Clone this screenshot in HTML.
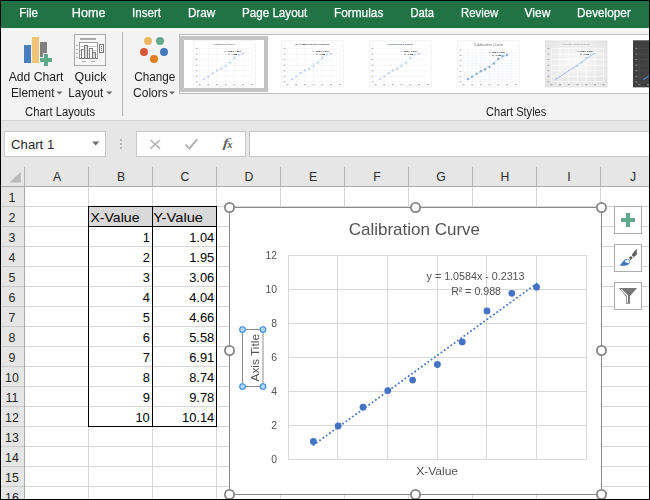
<!DOCTYPE html>
<html lang="en"><head><meta charset="utf-8"><title>Calibration Curve - Excel</title>
<style>html,body{margin:0;padding:0;background:#000;width:650px;height:500px;overflow:hidden}svg{display:block;position:absolute;left:0;top:0}text{font-family:"Liberation Sans", sans-serif;white-space:pre}.c{shape-rendering:crispEdges}</style></head><body>
<svg width="650" height="500" viewBox="0 0 650 500">
<g class="c">
<rect x="0" y="0" width="650" height="500" fill="#000"/>
<rect x="1" y="1" width="648" height="27" fill="#217346"/>
<rect x="1" y="28" width="648" height="92" fill="#f3f3f3"/>
<rect x="1" y="120" width="648" height="47" fill="#e6e6e6"/>
<rect x="1" y="120" width="648" height="1" fill="#d2d2d2"/>
<rect x="1" y="167" width="648" height="20" fill="#e6e6e6"/>
<rect x="1" y="187" width="24" height="312" fill="#e6e6e6"/>
<rect x="25" y="187" width="624" height="312" fill="#ffffff"/>
</g>
<g id="ribbon">
<g class="c">
<rect x="24" y="45" width="7" height="18" fill="#4a7ebb"/>
<rect x="32" y="37" width="7" height="26" fill="#f0c577"/>
<rect x="40" y="42" width="7" height="15" fill="#7f7f7f"/>
</g>
<g class="c">
<rect x="43" y="53" width="6" height="14" fill="#f3f3f3"/>
<rect x="39" y="57" width="14" height="6" fill="#f3f3f3"/>
<rect x="44" y="54" width="4" height="12" fill="#5fa88a"/>
<rect x="40" y="58" width="12" height="4" fill="#5fa88a"/>
</g>
<path d="M56.5 91.5h6l-3 3z" fill="#666"/>
<g class="c">
<rect x="74" y="34" width="32" height="32" fill="#a9a9a9"/>
<rect x="75" y="35" width="30" height="30" fill="#f6f6f6"/>
<rect x="80" y="38" width="16" height="2" fill="#ababab"/>
<rect x="79" y="42" width="19" height="17" fill="#9c9c9c"/>
<rect x="80" y="43" width="17" height="15" fill="#ffffff"/>
<rect x="80" y="46" width="17" height="1" fill="#c9c9c9"/>
<rect x="80" y="50" width="17" height="1" fill="#c9c9c9"/>
<rect x="80" y="54" width="17" height="1" fill="#c9c9c9"/>
<rect x="76" y="45" width="2" height="1" fill="#b4b4b4"/>
<rect x="76" y="49" width="2" height="1" fill="#b4b4b4"/>
<rect x="76" y="53" width="2" height="1" fill="#b4b4b4"/>
<rect x="76" y="57" width="2" height="1" fill="#b4b4b4"/>
<rect x="81" y="49" width="4" height="9" fill="#7d7d7d"/>
<rect x="82" y="50" width="2" height="8" fill="#ffffff"/>
<rect x="84" y="45" width="4" height="13" fill="#7d7d7d"/>
<rect x="85" y="46" width="2" height="12" fill="#d6d6d6"/>
<rect x="89" y="48" width="4" height="10" fill="#7d7d7d"/>
<rect x="90" y="49" width="2" height="9" fill="#ffffff"/>
<rect x="92" y="52" width="4" height="6" fill="#7d7d7d"/>
<rect x="93" y="53" width="2" height="5" fill="#d6d6d6"/>
<rect x="79" y="58" width="19" height="1" fill="#7d7d7d"/>
<rect x="99" y="44" width="5" height="9" fill="#777777"/>
<rect x="100" y="45" width="3" height="7" fill="#ffffff"/>
<rect x="101" y="46" width="1" height="1" fill="#777777"/>
<rect x="101" y="48" width="1" height="1" fill="#777777"/>
<rect x="101" y="50" width="1" height="1" fill="#777777"/>
<rect x="82" y="61" width="4" height="1" fill="#b0b0b0"/>
<rect x="91" y="61" width="4" height="1" fill="#b0b0b0"/>
</g>
<path d="M106.3 91.5h6l-3 3z" fill="#666"/>
<g class="c">
<rect x="122" y="32" width="1" height="84" fill="#b1b1b1"/>
</g>
<circle cx="148" cy="40.9" r="4.0" fill="#ecb762"/>
<circle cx="160" cy="40.9" r="4.0" fill="#66a88c"/>
<circle cx="144" cy="52.1" r="4.0" fill="#d75736"/>
<circle cx="164" cy="52.1" r="4.0" fill="#4279b6"/>
<circle cx="154" cy="59.1" r="4.0" fill="#e67b20"/>
<path d="M169 91.5h6l-3 3z" fill="#666"/>
<g class="c">
<rect x="179" y="34" width="470" height="60" fill="#b9bcbf"/>
<rect x="180" y="35" width="469" height="58" fill="#ffffff"/>
<rect x="180" y="36" width="88" height="56" fill="#c3c3c3"/>
<rect x="184" y="40" width="80" height="48" fill="#ffffff"/>
</g>
</g>
<g id="formulabar">
<g class="c">
<rect x="4" y="131" width="102" height="26" fill="#c8c8c8"/>
<rect x="5" y="132" width="100" height="24" fill="#ffffff"/>
<rect x="136" y="131" width="110" height="26" fill="#c8c8c8"/>
<rect x="137" y="132" width="108" height="24" fill="#ffffff"/>
<rect x="249" y="131" width="400" height="26" fill="#c8c8c8"/>
<rect x="250" y="132" width="399" height="24" fill="#ffffff"/>
<rect x="120" y="139" width="2" height="2" fill="#b4b4b4"/>
<rect x="120" y="143" width="2" height="2" fill="#b4b4b4"/>
<rect x="120" y="147" width="2" height="2" fill="#b4b4b4"/>
</g>
<text x="11.10" y="148.60" font-size="12.4" fill="#2a2a2a" textLength="43.12" lengthAdjust="spacingAndGlyphs">Chart 1</text>
<path d="M92 141.5h7.4l-3.7 4z" fill="#6e6e6e"/>
<path d="M150.3 140l9.7 8.700M160 140l-9.700 8.700" stroke="#b4b4b4" stroke-width="1.6" fill="none"/>
<path d="M185.600 144.800l3.900 3.700 7.700-9.300" stroke="#b4b4b4" stroke-width="2" fill="none"/>
<text x="222.3" y="147" font-size="13.2" font-style="italic" fill="#5a5a5a" style="font-family:'Liberation Serif',serif" textLength="6.6" lengthAdjust="spacingAndGlyphs">f</text>
<text x="227.2" y="148.2" font-size="9.5" font-style="italic" font-weight="bold" fill="#5a5a5a" style="font-family:'Liberation Serif',serif" textLength="5.3" lengthAdjust="spacingAndGlyphs">x</text>
</g>
<g id="grid" class="c">
<rect x="24" y="167" width="1" height="19" fill="#b4b4b4"/>
<rect x="88" y="167" width="1" height="19" fill="#b4b4b4"/>
<rect x="152" y="167" width="1" height="19" fill="#b4b4b4"/>
<rect x="216" y="167" width="1" height="19" fill="#b4b4b4"/>
<rect x="280" y="167" width="1" height="19" fill="#b4b4b4"/>
<rect x="344" y="167" width="1" height="19" fill="#b4b4b4"/>
<rect x="408" y="167" width="1" height="19" fill="#b4b4b4"/>
<rect x="472" y="167" width="1" height="19" fill="#b4b4b4"/>
<rect x="536" y="167" width="1" height="19" fill="#b4b4b4"/>
<rect x="600" y="167" width="1" height="19" fill="#b4b4b4"/>
<rect x="1" y="186" width="648" height="1" fill="#ababab"/>
<rect x="24" y="187" width="1" height="312" fill="#ababab"/>
<rect x="1" y="206" width="23" height="1" fill="#c9c9c9"/>
<rect x="25" y="206" width="624" height="1" fill="#d6d6d6"/>
<rect x="1" y="226" width="23" height="1" fill="#c9c9c9"/>
<rect x="25" y="226" width="624" height="1" fill="#d6d6d6"/>
<rect x="1" y="246" width="23" height="1" fill="#c9c9c9"/>
<rect x="25" y="246" width="624" height="1" fill="#d6d6d6"/>
<rect x="1" y="266" width="23" height="1" fill="#c9c9c9"/>
<rect x="25" y="266" width="624" height="1" fill="#d6d6d6"/>
<rect x="1" y="286" width="23" height="1" fill="#c9c9c9"/>
<rect x="25" y="286" width="624" height="1" fill="#d6d6d6"/>
<rect x="1" y="306" width="23" height="1" fill="#c9c9c9"/>
<rect x="25" y="306" width="624" height="1" fill="#d6d6d6"/>
<rect x="1" y="326" width="23" height="1" fill="#c9c9c9"/>
<rect x="25" y="326" width="624" height="1" fill="#d6d6d6"/>
<rect x="1" y="346" width="23" height="1" fill="#c9c9c9"/>
<rect x="25" y="346" width="624" height="1" fill="#d6d6d6"/>
<rect x="1" y="366" width="23" height="1" fill="#c9c9c9"/>
<rect x="25" y="366" width="624" height="1" fill="#d6d6d6"/>
<rect x="1" y="386" width="23" height="1" fill="#c9c9c9"/>
<rect x="25" y="386" width="624" height="1" fill="#d6d6d6"/>
<rect x="1" y="406" width="23" height="1" fill="#c9c9c9"/>
<rect x="25" y="406" width="624" height="1" fill="#d6d6d6"/>
<rect x="1" y="426" width="23" height="1" fill="#c9c9c9"/>
<rect x="25" y="426" width="624" height="1" fill="#d6d6d6"/>
<rect x="1" y="446" width="23" height="1" fill="#c9c9c9"/>
<rect x="25" y="446" width="624" height="1" fill="#d6d6d6"/>
<rect x="1" y="466" width="23" height="1" fill="#c9c9c9"/>
<rect x="25" y="466" width="624" height="1" fill="#d6d6d6"/>
<rect x="1" y="486" width="23" height="1" fill="#c9c9c9"/>
<rect x="25" y="486" width="624" height="1" fill="#d6d6d6"/>
<rect x="88" y="187" width="1" height="312" fill="#d6d6d6"/>
<rect x="152" y="187" width="1" height="312" fill="#d6d6d6"/>
<rect x="216" y="187" width="1" height="312" fill="#d6d6d6"/>
<rect x="280" y="187" width="1" height="312" fill="#d6d6d6"/>
<rect x="344" y="187" width="1" height="312" fill="#d6d6d6"/>
<rect x="408" y="187" width="1" height="312" fill="#d6d6d6"/>
<rect x="472" y="187" width="1" height="312" fill="#d6d6d6"/>
<rect x="536" y="187" width="1" height="312" fill="#d6d6d6"/>
<rect x="600" y="187" width="1" height="312" fill="#d6d6d6"/>
</g>
<path d="M20.8 171.8v10.8h-11.2z" fill="#b9b9b9"/>
<g id="headers">
<text x="57" y="180.8" font-size="12.2" fill="#2b2b2b" text-anchor="middle">A</text>
<text x="121" y="180.8" font-size="12.2" fill="#2b2b2b" text-anchor="middle">B</text>
<text x="185" y="180.8" font-size="12.2" fill="#2b2b2b" text-anchor="middle">C</text>
<text x="249" y="180.8" font-size="12.2" fill="#2b2b2b" text-anchor="middle">D</text>
<text x="313" y="180.8" font-size="12.2" fill="#2b2b2b" text-anchor="middle">E</text>
<text x="377" y="180.8" font-size="12.2" fill="#2b2b2b" text-anchor="middle">F</text>
<text x="441" y="180.8" font-size="12.2" fill="#2b2b2b" text-anchor="middle">G</text>
<text x="505" y="180.8" font-size="12.2" fill="#2b2b2b" text-anchor="middle">H</text>
<text x="569" y="180.8" font-size="12.2" fill="#2b2b2b" text-anchor="middle">I</text>
<text x="633" y="180.8" font-size="12.2" fill="#2b2b2b" text-anchor="middle">J</text>
<text x="12.0" y="202" font-size="12.4" fill="#262626" text-anchor="middle">1</text>
<text x="12.0" y="222" font-size="12.4" fill="#262626" text-anchor="middle">2</text>
<text x="12.0" y="242" font-size="12.4" fill="#262626" text-anchor="middle">3</text>
<text x="12.0" y="262" font-size="12.4" fill="#262626" text-anchor="middle">4</text>
<text x="12.0" y="282" font-size="12.4" fill="#262626" text-anchor="middle">5</text>
<text x="12.0" y="302" font-size="12.4" fill="#262626" text-anchor="middle">6</text>
<text x="12.0" y="322" font-size="12.4" fill="#262626" text-anchor="middle">7</text>
<text x="12.0" y="342" font-size="12.4" fill="#262626" text-anchor="middle">8</text>
<text x="12.0" y="362" font-size="12.4" fill="#262626" text-anchor="middle">9</text>
<text x="12.0" y="382" font-size="12.4" fill="#262626" text-anchor="middle">10</text>
<text x="12.0" y="402" font-size="12.4" fill="#262626" text-anchor="middle">11</text>
<text x="12.0" y="422" font-size="12.4" fill="#262626" text-anchor="middle">12</text>
<text x="12.0" y="442" font-size="12.4" fill="#262626" text-anchor="middle">13</text>
<text x="12.0" y="462" font-size="12.4" fill="#262626" text-anchor="middle">14</text>
<text x="12.0" y="482" font-size="12.4" fill="#262626" text-anchor="middle">15</text>
<text x="12.0" y="502" font-size="12.4" fill="#262626" text-anchor="middle">16</text>
</g>
<g id="table">
<g class="c">
<rect x="89" y="207" width="63" height="19" fill="#d9d9d9"/>
<rect x="153" y="207" width="63" height="19" fill="#d9d9d9"/>
<rect x="88" y="206" width="129" height="1" fill="#000"/>
<rect x="88" y="226" width="129" height="1" fill="#000"/>
<rect x="88" y="426" width="129" height="1" fill="#000"/>
<rect x="88" y="206" width="1" height="221" fill="#000"/>
<rect x="152" y="206" width="1" height="221" fill="#000"/>
<rect x="216" y="206" width="1" height="221" fill="#000"/>
</g>
<text x="90.47" y="222.20" font-size="13.3" fill="#000" textLength="49.00" lengthAdjust="spacingAndGlyphs">X-Value</text>
<text x="153.17" y="222.20" font-size="13.3" fill="#000" textLength="49.90" lengthAdjust="spacingAndGlyphs">Y-Value</text>
<text x="149.8" y="241.8" font-size="12.9" fill="#000" text-anchor="end">1</text>
<text x="214.3" y="241.8" font-size="12.9" fill="#000" text-anchor="end">1.04</text>
<text x="149.8" y="261.8" font-size="12.9" fill="#000" text-anchor="end">2</text>
<text x="214.3" y="261.8" font-size="12.9" fill="#000" text-anchor="end">1.95</text>
<text x="149.8" y="281.8" font-size="12.9" fill="#000" text-anchor="end">3</text>
<text x="214.3" y="281.8" font-size="12.9" fill="#000" text-anchor="end">3.06</text>
<text x="149.8" y="301.8" font-size="12.9" fill="#000" text-anchor="end">4</text>
<text x="214.3" y="301.8" font-size="12.9" fill="#000" text-anchor="end">4.04</text>
<text x="149.8" y="321.8" font-size="12.9" fill="#000" text-anchor="end">5</text>
<text x="214.3" y="321.8" font-size="12.9" fill="#000" text-anchor="end">4.66</text>
<text x="149.8" y="341.8" font-size="12.9" fill="#000" text-anchor="end">6</text>
<text x="214.3" y="341.8" font-size="12.9" fill="#000" text-anchor="end">5.58</text>
<text x="149.8" y="361.8" font-size="12.9" fill="#000" text-anchor="end">7</text>
<text x="214.3" y="361.8" font-size="12.9" fill="#000" text-anchor="end">6.91</text>
<text x="149.8" y="381.8" font-size="12.9" fill="#000" text-anchor="end">8</text>
<text x="214.3" y="381.8" font-size="12.9" fill="#000" text-anchor="end">8.74</text>
<text x="149.8" y="401.8" font-size="12.9" fill="#000" text-anchor="end">9</text>
<text x="214.3" y="401.8" font-size="12.9" fill="#000" text-anchor="end">9.78</text>
<text x="149.8" y="421.8" font-size="12.9" fill="#000" text-anchor="end">10</text>
<text x="214.3" y="421.8" font-size="12.9" fill="#000" text-anchor="end">10.14</text>
</g>
<g id="chart">
<g class="c">
<rect x="229" y="207" width="373" height="288" fill="#8a8a8a"/>
<rect x="230" y="208" width="371" height="286" fill="#ffffff"/>
</g>
<g class="c">
<rect x="288" y="255" width="1" height="205" fill="#d9d9d9"/>
<rect x="337" y="255" width="1" height="205" fill="#d9d9d9"/>
<rect x="387" y="255" width="1" height="205" fill="#d9d9d9"/>
<rect x="437" y="255" width="1" height="205" fill="#d9d9d9"/>
<rect x="486" y="255" width="1" height="205" fill="#d9d9d9"/>
<rect x="536" y="255" width="1" height="205" fill="#d9d9d9"/>
<rect x="586" y="255" width="1" height="205" fill="#d9d9d9"/>
<rect x="288" y="255" width="299" height="1" fill="#d9d9d9"/>
<rect x="288" y="289" width="299" height="1" fill="#d9d9d9"/>
<rect x="288" y="323" width="299" height="1" fill="#d9d9d9"/>
<rect x="288" y="357" width="299" height="1" fill="#d9d9d9"/>
<rect x="288" y="391" width="299" height="1" fill="#d9d9d9"/>
<rect x="288" y="425" width="299" height="1" fill="#d9d9d9"/>
<rect x="288" y="459" width="299" height="1" fill="#d9d9d9"/>
</g>
<line x1="313.4" y1="445.0" x2="536.6" y2="283.6" stroke="#4472c4" stroke-width="1.9" stroke-dasharray="0.1 3.95" stroke-linecap="round"/>
<circle cx="313.4" cy="441.4" r="3.4" fill="#4472c4"/>
<circle cx="338.2" cy="426.0" r="3.4" fill="#4472c4"/>
<circle cx="363.0" cy="407.2" r="3.4" fill="#4472c4"/>
<circle cx="387.8" cy="390.6" r="3.4" fill="#4472c4"/>
<circle cx="412.6" cy="380.1" r="3.4" fill="#4472c4"/>
<circle cx="437.4" cy="364.5" r="3.4" fill="#4472c4"/>
<circle cx="462.2" cy="341.9" r="3.4" fill="#4472c4"/>
<circle cx="487.0" cy="310.9" r="3.4" fill="#4472c4"/>
<circle cx="511.8" cy="293.3" r="3.4" fill="#4472c4"/>
<circle cx="536.6" cy="287.2" r="3.4" fill="#4472c4"/>
<rect x="242.5" y="329.5" width="20.500" height="57" fill="none" stroke="#8c8c8c" stroke-width="1"/>
<circle cx="242.5" cy="329.5" r="2.8" fill="#b5d6f5" stroke="#2f8de6" stroke-width="1.1"/>
<circle cx="242.5" cy="386.5" r="2.8" fill="#b5d6f5" stroke="#2f8de6" stroke-width="1.1"/>
<circle cx="263" cy="329.5" r="2.8" fill="#b5d6f5" stroke="#2f8de6" stroke-width="1.1"/>
<circle cx="263" cy="386.5" r="2.8" fill="#b5d6f5" stroke="#2f8de6" stroke-width="1.1"/>
<circle cx="229.5" cy="207.5" r="4.6" fill="#fff" stroke="#858585" stroke-width="1.8"/>
<circle cx="229.5" cy="350.5" r="4.6" fill="#fff" stroke="#858585" stroke-width="1.8"/>
<circle cx="229.5" cy="494.5" r="4.6" fill="#fff" stroke="#858585" stroke-width="1.8"/>
<circle cx="415.5" cy="207.5" r="4.6" fill="#fff" stroke="#858585" stroke-width="1.8"/>
<circle cx="415.5" cy="494.5" r="4.6" fill="#fff" stroke="#858585" stroke-width="1.8"/>
<circle cx="601.5" cy="207.5" r="4.6" fill="#fff" stroke="#858585" stroke-width="1.8"/>
<circle cx="601.5" cy="350.5" r="4.6" fill="#fff" stroke="#858585" stroke-width="1.8"/>
<circle cx="601.5" cy="494.5" r="4.6" fill="#fff" stroke="#858585" stroke-width="1.8"/>
</g>
<g id="chartbuttons">
<g class="c">
<rect x="614" y="206" width="28" height="28" fill="#ababab"/>
<rect x="615" y="207" width="26" height="26" fill="#ffffff"/>
<rect x="614" y="244" width="28" height="28" fill="#ababab"/>
<rect x="615" y="245" width="26" height="26" fill="#ffffff"/>
<rect x="614" y="282" width="28" height="28" fill="#ababab"/>
<rect x="615" y="283" width="26" height="26" fill="#ffffff"/>
<rect x="626" y="213" width="4" height="14" fill="#5fa88a"/>
<rect x="621" y="218" width="14" height="4" fill="#5fa88a"/>
</g>
<path d="M636.600 248.700L636.900 254.300L633.800 257.300L631.600 255.100Z" fill="#5c5c5c"/>
<path d="M630.900 255.900L632.800 257.800L630.700 259.900L628.800 258Z" fill="#5c5c5c"/>
<path d="M619.600 265.700C622 263 623 260.500 625.500 259.300C627.500 258.300 629.900 259.200 630.100 261.300C630.300 264 627.500 265.600 624.500 265.800C622.500 265.900 621 265.900 619.600 265.700Z" fill="#3f78b9"/>
<path d="M625.200 260.500C626.500 259.300 629 259.400 629.500 261.200C629.800 262.600 628.800 263.400 627.800 263.100C627.200 262.600 626.400 263.100 625.700 262.500C624.900 262 624.700 261.100 625.200 260.500Z" fill="#f6f9fd"/>
<path d="M618.900 288h18.200l-7.200 8.300v7.500h-3.800v-7.300z" fill="#767676"/>
<path d="M621.200 289.300l6.200 6.300v7.200" stroke="#fff" stroke-width="1.150" fill="none"/>
</g>
<g class="c">
<rect x="0" y="0" width="650" height="1" fill="#000"/>
<rect x="0" y="499" width="650" height="1" fill="#000"/>
<rect x="0" y="0" width="1" height="500" fill="#000"/>
<rect x="649" y="0" width="1" height="500" fill="#000"/>
</g>
</svg>
<svg width="650" height="500" viewBox="0 0 650 500" style="will-change:transform">
<g id="gallery">
<g transform="translate(193.2,40.3) scale(0.977,0.98)">
<rect x="0.5" y="0.5" width="63" height="47" fill="#fff" stroke="#f2f2f2"/>
<line x1="6.50" y1="8.3" x2="6.50" y2="42.4" stroke="#f0f2f7" stroke-width="0.6"/>
<line x1="15.42" y1="8.3" x2="15.42" y2="42.4" stroke="#f0f2f7" stroke-width="0.6"/>
<line x1="24.33" y1="8.3" x2="24.33" y2="42.4" stroke="#f0f2f7" stroke-width="0.6"/>
<line x1="33.25" y1="8.3" x2="33.25" y2="42.4" stroke="#f0f2f7" stroke-width="0.6"/>
<line x1="42.17" y1="8.3" x2="42.17" y2="42.4" stroke="#f0f2f7" stroke-width="0.6"/>
<line x1="51.08" y1="8.3" x2="51.08" y2="42.4" stroke="#f0f2f7" stroke-width="0.6"/>
<line x1="60.00" y1="8.3" x2="60.00" y2="42.4" stroke="#f0f2f7" stroke-width="0.6"/>
<line x1="6.5" y1="8.30" x2="60.0" y2="8.30" stroke="#f0f2f7" stroke-width="0.6"/>
<line x1="6.5" y1="13.98" x2="60.0" y2="13.98" stroke="#f0f2f7" stroke-width="0.6"/>
<line x1="6.5" y1="19.67" x2="60.0" y2="19.67" stroke="#f0f2f7" stroke-width="0.6"/>
<line x1="6.5" y1="25.35" x2="60.0" y2="25.35" stroke="#f0f2f7" stroke-width="0.6"/>
<line x1="6.5" y1="31.03" x2="60.0" y2="31.03" stroke="#f0f2f7" stroke-width="0.6"/>
<line x1="6.5" y1="36.72" x2="60.0" y2="36.72" stroke="#f0f2f7" stroke-width="0.6"/>
<line x1="6.5" y1="42.40" x2="60.0" y2="42.40" stroke="#f0f2f7" stroke-width="0.6"/>
<rect x="2.6" y="7.80" width="1.8" height="1" fill="#8a8a8a" opacity="0.75"/>
<rect x="2.6" y="13.48" width="1.8" height="1" fill="#8a8a8a" opacity="0.75"/>
<rect x="2.6" y="19.17" width="1.8" height="1" fill="#8a8a8a" opacity="0.75"/>
<rect x="2.6" y="24.85" width="1.8" height="1" fill="#8a8a8a" opacity="0.75"/>
<rect x="2.6" y="30.53" width="1.8" height="1" fill="#8a8a8a" opacity="0.75"/>
<rect x="2.6" y="36.22" width="1.8" height="1" fill="#8a8a8a" opacity="0.75"/>
<rect x="2.6" y="41.90" width="1.8" height="1" fill="#8a8a8a" opacity="0.75"/>
<rect x="5.50" y="44.8" width="2" height="1" fill="#8a8a8a" opacity="0.75"/>
<rect x="14.42" y="44.8" width="2" height="1" fill="#8a8a8a" opacity="0.75"/>
<rect x="23.33" y="44.8" width="2" height="1" fill="#8a8a8a" opacity="0.75"/>
<rect x="32.25" y="44.8" width="2" height="1" fill="#8a8a8a" opacity="0.75"/>
<rect x="41.17" y="44.8" width="2" height="1" fill="#8a8a8a" opacity="0.75"/>
<rect x="50.08" y="44.8" width="2" height="1" fill="#8a8a8a" opacity="0.75"/>
<rect x="59.00" y="44.8" width="2" height="1" fill="#8a8a8a" opacity="0.75"/>
<line x1="11.0" y1="40.0" x2="51.1" y2="13.0" stroke="#b4c7ea" stroke-width="0.6" opacity="0.55"/>
<circle cx="11.0" cy="39.4" r="1.0" fill="#b4c7ea"/>
<circle cx="15.4" cy="36.9" r="1.0" fill="#b4c7ea"/>
<circle cx="19.9" cy="33.7" r="1.0" fill="#b4c7ea"/>
<circle cx="24.3" cy="30.9" r="1.0" fill="#b4c7ea"/>
<circle cx="28.8" cy="29.2" r="1.0" fill="#b4c7ea"/>
<circle cx="33.2" cy="26.5" r="1.0" fill="#b4c7ea"/>
<circle cx="37.7" cy="22.8" r="1.0" fill="#b4c7ea"/>
<circle cx="42.2" cy="17.6" r="1.0" fill="#b4c7ea"/>
<circle cx="46.6" cy="14.6" r="1.0" fill="#b4c7ea"/>
<circle cx="51.1" cy="13.6" r="1.0" fill="#b4c7ea"/>
<text x="21.0" y="4.6" font-size="2.3" fill="#3a3a3a" textLength="22" lengthAdjust="spacingAndGlyphs">Calibration Curve</text>
<text x="32.4" y="11.7" font-size="2.2" font-weight="bold" fill="#2a2a2a" textLength="16.3" lengthAdjust="spacingAndGlyphs">y = 1.0584x - 0.2313</text>
<text x="36" y="14.7" font-size="2.2" font-weight="bold" fill="#2a2a2a" textLength="9" lengthAdjust="spacingAndGlyphs">R² = 0.988</text>
</g>
<g transform="translate(281.1,40.3) scale(0.977,0.98)">
<rect x="0.5" y="0.5" width="63" height="47" fill="#fff" stroke="#f2f2f2"/>
<line x1="6.50" y1="8.3" x2="6.50" y2="42.4" stroke="#f0f2f7" stroke-width="0.6"/>
<line x1="15.42" y1="8.3" x2="15.42" y2="42.4" stroke="#f0f2f7" stroke-width="0.6"/>
<line x1="24.33" y1="8.3" x2="24.33" y2="42.4" stroke="#f0f2f7" stroke-width="0.6"/>
<line x1="33.25" y1="8.3" x2="33.25" y2="42.4" stroke="#f0f2f7" stroke-width="0.6"/>
<line x1="42.17" y1="8.3" x2="42.17" y2="42.4" stroke="#f0f2f7" stroke-width="0.6"/>
<line x1="51.08" y1="8.3" x2="51.08" y2="42.4" stroke="#f0f2f7" stroke-width="0.6"/>
<line x1="60.00" y1="8.3" x2="60.00" y2="42.4" stroke="#f0f2f7" stroke-width="0.6"/>
<line x1="6.5" y1="8.30" x2="60.0" y2="8.30" stroke="#f0f2f7" stroke-width="0.6"/>
<line x1="6.5" y1="13.98" x2="60.0" y2="13.98" stroke="#f0f2f7" stroke-width="0.6"/>
<line x1="6.5" y1="19.67" x2="60.0" y2="19.67" stroke="#f0f2f7" stroke-width="0.6"/>
<line x1="6.5" y1="25.35" x2="60.0" y2="25.35" stroke="#f0f2f7" stroke-width="0.6"/>
<line x1="6.5" y1="31.03" x2="60.0" y2="31.03" stroke="#f0f2f7" stroke-width="0.6"/>
<line x1="6.5" y1="36.72" x2="60.0" y2="36.72" stroke="#f0f2f7" stroke-width="0.6"/>
<line x1="6.5" y1="42.40" x2="60.0" y2="42.40" stroke="#f0f2f7" stroke-width="0.6"/>
<rect x="2.6" y="7.80" width="1.8" height="1" fill="#8a8a8a" opacity="0.75"/>
<rect x="2.6" y="13.48" width="1.8" height="1" fill="#8a8a8a" opacity="0.75"/>
<rect x="2.6" y="19.17" width="1.8" height="1" fill="#8a8a8a" opacity="0.75"/>
<rect x="2.6" y="24.85" width="1.8" height="1" fill="#8a8a8a" opacity="0.75"/>
<rect x="2.6" y="30.53" width="1.8" height="1" fill="#8a8a8a" opacity="0.75"/>
<rect x="2.6" y="36.22" width="1.8" height="1" fill="#8a8a8a" opacity="0.75"/>
<rect x="2.6" y="41.90" width="1.8" height="1" fill="#8a8a8a" opacity="0.75"/>
<rect x="5.50" y="44.8" width="2" height="1" fill="#8a8a8a" opacity="0.75"/>
<rect x="14.42" y="44.8" width="2" height="1" fill="#8a8a8a" opacity="0.75"/>
<rect x="23.33" y="44.8" width="2" height="1" fill="#8a8a8a" opacity="0.75"/>
<rect x="32.25" y="44.8" width="2" height="1" fill="#8a8a8a" opacity="0.75"/>
<rect x="41.17" y="44.8" width="2" height="1" fill="#8a8a8a" opacity="0.75"/>
<rect x="50.08" y="44.8" width="2" height="1" fill="#8a8a8a" opacity="0.75"/>
<rect x="59.00" y="44.8" width="2" height="1" fill="#8a8a8a" opacity="0.75"/>
<line x1="11.0" y1="40.0" x2="51.1" y2="13.0" stroke="#b4c7ea" stroke-width="0.6" opacity="0.55"/>
<circle cx="11.0" cy="39.4" r="1.0" fill="#b4c7ea"/>
<circle cx="15.4" cy="36.9" r="1.0" fill="#b4c7ea"/>
<circle cx="19.9" cy="33.7" r="1.0" fill="#b4c7ea"/>
<circle cx="24.3" cy="30.9" r="1.0" fill="#b4c7ea"/>
<circle cx="28.8" cy="29.2" r="1.0" fill="#b4c7ea"/>
<circle cx="33.2" cy="26.5" r="1.0" fill="#b4c7ea"/>
<circle cx="37.7" cy="22.8" r="1.0" fill="#b4c7ea"/>
<circle cx="42.2" cy="17.6" r="1.0" fill="#b4c7ea"/>
<circle cx="46.6" cy="14.6" r="1.0" fill="#b4c7ea"/>
<circle cx="51.1" cy="13.6" r="1.0" fill="#b4c7ea"/>
<text x="14.5" y="4.8" font-size="2.4" fill="#3a3a3a" font-weight="bold" textLength="35" lengthAdjust="spacingAndGlyphs">CALIBRATION CURVE</text>
<text x="32.4" y="11.7" font-size="2.2" font-weight="bold" fill="#2a2a2a" textLength="16.3" lengthAdjust="spacingAndGlyphs">y = 1.0584x - 0.2313</text>
<text x="36" y="14.7" font-size="2.2" font-weight="bold" fill="#2a2a2a" textLength="9" lengthAdjust="spacingAndGlyphs">R² = 0.988</text>
</g>
<g transform="translate(369.1,40.3) scale(0.977,0.98)">
<rect x="0.5" y="0.5" width="63" height="47" fill="#fff" stroke="#f2f2f2"/>
<line x1="6.5" y1="8.30" x2="60.0" y2="8.30" stroke="#f0f2f7" stroke-width="0.6"/>
<line x1="6.5" y1="13.98" x2="60.0" y2="13.98" stroke="#f0f2f7" stroke-width="0.6"/>
<line x1="6.5" y1="19.67" x2="60.0" y2="19.67" stroke="#f0f2f7" stroke-width="0.6"/>
<line x1="6.5" y1="25.35" x2="60.0" y2="25.35" stroke="#f0f2f7" stroke-width="0.6"/>
<line x1="6.5" y1="31.03" x2="60.0" y2="31.03" stroke="#f0f2f7" stroke-width="0.6"/>
<line x1="6.5" y1="36.72" x2="60.0" y2="36.72" stroke="#f0f2f7" stroke-width="0.6"/>
<line x1="6.5" y1="42.40" x2="60.0" y2="42.40" stroke="#f0f2f7" stroke-width="0.6"/>
<rect x="2.6" y="7.80" width="1.8" height="1" fill="#8a8a8a" opacity="0.75"/>
<rect x="2.6" y="13.48" width="1.8" height="1" fill="#8a8a8a" opacity="0.75"/>
<rect x="2.6" y="19.17" width="1.8" height="1" fill="#8a8a8a" opacity="0.75"/>
<rect x="2.6" y="24.85" width="1.8" height="1" fill="#8a8a8a" opacity="0.75"/>
<rect x="2.6" y="30.53" width="1.8" height="1" fill="#8a8a8a" opacity="0.75"/>
<rect x="2.6" y="36.22" width="1.8" height="1" fill="#8a8a8a" opacity="0.75"/>
<rect x="2.6" y="41.90" width="1.8" height="1" fill="#8a8a8a" opacity="0.75"/>
<rect x="5.50" y="44.8" width="2" height="1" fill="#8a8a8a" opacity="0.75"/>
<rect x="14.42" y="44.8" width="2" height="1" fill="#8a8a8a" opacity="0.75"/>
<rect x="23.33" y="44.8" width="2" height="1" fill="#8a8a8a" opacity="0.75"/>
<rect x="32.25" y="44.8" width="2" height="1" fill="#8a8a8a" opacity="0.75"/>
<rect x="41.17" y="44.8" width="2" height="1" fill="#8a8a8a" opacity="0.75"/>
<rect x="50.08" y="44.8" width="2" height="1" fill="#8a8a8a" opacity="0.75"/>
<rect x="59.00" y="44.8" width="2" height="1" fill="#8a8a8a" opacity="0.75"/>
<line x1="11.0" y1="40.0" x2="51.1" y2="13.0" stroke="#b4c7ea" stroke-width="0.6" opacity="0.55"/>
<circle cx="11.0" cy="39.4" r="1.0" fill="#b4c7ea"/>
<circle cx="15.4" cy="36.9" r="1.0" fill="#b4c7ea"/>
<circle cx="19.9" cy="33.7" r="1.0" fill="#b4c7ea"/>
<circle cx="24.3" cy="30.9" r="1.0" fill="#b4c7ea"/>
<circle cx="28.8" cy="29.2" r="1.0" fill="#b4c7ea"/>
<circle cx="33.2" cy="26.5" r="1.0" fill="#b4c7ea"/>
<circle cx="37.7" cy="22.8" r="1.0" fill="#b4c7ea"/>
<circle cx="42.2" cy="17.6" r="1.0" fill="#b4c7ea"/>
<circle cx="46.6" cy="14.6" r="1.0" fill="#b4c7ea"/>
<circle cx="51.1" cy="13.6" r="1.0" fill="#b4c7ea"/>
<text x="19.0" y="4.8" font-size="2.3" fill="#3b4a63" font-weight="bold" textLength="26" lengthAdjust="spacingAndGlyphs">CALIBRATION CURVE</text>
<text x="32.4" y="11.7" font-size="2.2" font-weight="bold" fill="#2a2a2a" textLength="16.3" lengthAdjust="spacingAndGlyphs">y = 1.0584x - 0.2313</text>
<text x="36" y="14.7" font-size="2.2" font-weight="bold" fill="#2a2a2a" textLength="9" lengthAdjust="spacingAndGlyphs">R² = 0.988</text>
</g>
<g transform="translate(457.1,40.3) scale(0.977,0.98)">
<rect x="0.5" y="0.5" width="63" height="47" fill="#fff" stroke="#f2f2f2"/>
<line x1="6.50" y1="10.0" x2="6.50" y2="42.4" stroke="#f0f2f7" stroke-width="0.6"/>
<line x1="10.96" y1="10.0" x2="10.96" y2="42.4" stroke="#f0f2f7" stroke-width="0.6"/>
<line x1="15.42" y1="10.0" x2="15.42" y2="42.4" stroke="#f0f2f7" stroke-width="0.6"/>
<line x1="19.88" y1="10.0" x2="19.88" y2="42.4" stroke="#f0f2f7" stroke-width="0.6"/>
<line x1="24.33" y1="10.0" x2="24.33" y2="42.4" stroke="#f0f2f7" stroke-width="0.6"/>
<line x1="28.79" y1="10.0" x2="28.79" y2="42.4" stroke="#f0f2f7" stroke-width="0.6"/>
<line x1="33.25" y1="10.0" x2="33.25" y2="42.4" stroke="#f0f2f7" stroke-width="0.6"/>
<line x1="37.71" y1="10.0" x2="37.71" y2="42.4" stroke="#f0f2f7" stroke-width="0.6"/>
<line x1="42.17" y1="10.0" x2="42.17" y2="42.4" stroke="#f0f2f7" stroke-width="0.6"/>
<line x1="46.62" y1="10.0" x2="46.62" y2="42.4" stroke="#f0f2f7" stroke-width="0.6"/>
<line x1="51.08" y1="10.0" x2="51.08" y2="42.4" stroke="#f0f2f7" stroke-width="0.6"/>
<line x1="55.54" y1="10.0" x2="55.54" y2="42.4" stroke="#f0f2f7" stroke-width="0.6"/>
<line x1="60.00" y1="10.0" x2="60.00" y2="42.4" stroke="#f0f2f7" stroke-width="0.6"/>
<line x1="6.5" y1="10.00" x2="60.0" y2="10.00" stroke="#f0f2f7" stroke-width="0.6"/>
<line x1="6.5" y1="12.70" x2="60.0" y2="12.70" stroke="#f0f2f7" stroke-width="0.6"/>
<line x1="6.5" y1="15.40" x2="60.0" y2="15.40" stroke="#f0f2f7" stroke-width="0.6"/>
<line x1="6.5" y1="18.10" x2="60.0" y2="18.10" stroke="#f0f2f7" stroke-width="0.6"/>
<line x1="6.5" y1="20.80" x2="60.0" y2="20.80" stroke="#f0f2f7" stroke-width="0.6"/>
<line x1="6.5" y1="23.50" x2="60.0" y2="23.50" stroke="#f0f2f7" stroke-width="0.6"/>
<line x1="6.5" y1="26.20" x2="60.0" y2="26.20" stroke="#f0f2f7" stroke-width="0.6"/>
<line x1="6.5" y1="28.90" x2="60.0" y2="28.90" stroke="#f0f2f7" stroke-width="0.6"/>
<line x1="6.5" y1="31.60" x2="60.0" y2="31.60" stroke="#f0f2f7" stroke-width="0.6"/>
<line x1="6.5" y1="34.30" x2="60.0" y2="34.30" stroke="#f0f2f7" stroke-width="0.6"/>
<line x1="6.5" y1="37.00" x2="60.0" y2="37.00" stroke="#f0f2f7" stroke-width="0.6"/>
<line x1="6.5" y1="39.70" x2="60.0" y2="39.70" stroke="#f0f2f7" stroke-width="0.6"/>
<line x1="6.5" y1="42.40" x2="60.0" y2="42.40" stroke="#f0f2f7" stroke-width="0.6"/>
<rect x="2.6" y="9.50" width="1.8" height="1" fill="#8a8a8a" opacity="0.75"/>
<rect x="2.6" y="14.90" width="1.8" height="1" fill="#8a8a8a" opacity="0.75"/>
<rect x="2.6" y="20.30" width="1.8" height="1" fill="#8a8a8a" opacity="0.75"/>
<rect x="2.6" y="25.70" width="1.8" height="1" fill="#8a8a8a" opacity="0.75"/>
<rect x="2.6" y="31.10" width="1.8" height="1" fill="#8a8a8a" opacity="0.75"/>
<rect x="2.6" y="36.50" width="1.8" height="1" fill="#8a8a8a" opacity="0.75"/>
<rect x="2.6" y="41.90" width="1.8" height="1" fill="#8a8a8a" opacity="0.75"/>
<rect x="5.50" y="44.8" width="2" height="1" fill="#8a8a8a" opacity="0.75"/>
<rect x="14.42" y="44.8" width="2" height="1" fill="#8a8a8a" opacity="0.75"/>
<rect x="23.33" y="44.8" width="2" height="1" fill="#8a8a8a" opacity="0.75"/>
<rect x="32.25" y="44.8" width="2" height="1" fill="#8a8a8a" opacity="0.75"/>
<rect x="41.17" y="44.8" width="2" height="1" fill="#8a8a8a" opacity="0.75"/>
<rect x="50.08" y="44.8" width="2" height="1" fill="#8a8a8a" opacity="0.75"/>
<rect x="59.00" y="44.8" width="2" height="1" fill="#8a8a8a" opacity="0.75"/>
<line x1="11.0" y1="40.2" x2="51.1" y2="14.4" stroke="#8eaadb" stroke-width="0.6" opacity="0.7"/>
<circle cx="11.0" cy="39.6" r="1.2" fill="#8eaadb"/>
<circle cx="15.4" cy="37.1" r="1.2" fill="#8eaadb"/>
<circle cx="19.9" cy="34.1" r="1.2" fill="#8eaadb"/>
<circle cx="24.3" cy="31.5" r="1.2" fill="#8eaadb"/>
<circle cx="28.8" cy="29.8" r="1.2" fill="#8eaadb"/>
<circle cx="33.2" cy="27.3" r="1.2" fill="#8eaadb"/>
<circle cx="37.7" cy="23.7" r="1.2" fill="#8eaadb"/>
<circle cx="42.2" cy="18.8" r="1.2" fill="#8eaadb"/>
<circle cx="46.6" cy="16.0" r="1.2" fill="#8eaadb"/>
<circle cx="51.1" cy="15.0" r="1.2" fill="#8eaadb"/>
<text x="17.0" y="5.7" font-size="3.5" fill="#6e6e6e" textLength="30" lengthAdjust="spacingAndGlyphs">Calibration Curve</text>
<text x="32.4" y="13.4" font-size="2.2" font-weight="bold" fill="#2a2a2a" textLength="16.3" lengthAdjust="spacingAndGlyphs">y = 1.0584x - 0.2313</text>
<text x="36" y="16.4" font-size="2.2" font-weight="bold" fill="#2a2a2a" textLength="9" lengthAdjust="spacingAndGlyphs">R² = 0.988</text>
</g>
<g transform="translate(545.0,40.3) scale(0.977,0.98)">
<defs><radialGradient id="tg" cx="0.5" cy="0.45" r="0.75"><stop offset="0" stop-color="#fafafa"/><stop offset="1" stop-color="#e0e0e0"/></radialGradient></defs>
<rect x="0" y="0" width="64" height="48" fill="url(#tg)"/>
<line x1="6.50" y1="8.3" x2="6.50" y2="42.4" stroke="#ffffff" stroke-width="0.6"/>
<line x1="15.42" y1="8.3" x2="15.42" y2="42.4" stroke="#ffffff" stroke-width="0.6"/>
<line x1="24.33" y1="8.3" x2="24.33" y2="42.4" stroke="#ffffff" stroke-width="0.6"/>
<line x1="33.25" y1="8.3" x2="33.25" y2="42.4" stroke="#ffffff" stroke-width="0.6"/>
<line x1="42.17" y1="8.3" x2="42.17" y2="42.4" stroke="#ffffff" stroke-width="0.6"/>
<line x1="51.08" y1="8.3" x2="51.08" y2="42.4" stroke="#ffffff" stroke-width="0.6"/>
<line x1="60.00" y1="8.3" x2="60.00" y2="42.4" stroke="#ffffff" stroke-width="0.6"/>
<line x1="6.5" y1="8.30" x2="60.0" y2="8.30" stroke="#ffffff" stroke-width="0.6"/>
<line x1="6.5" y1="13.98" x2="60.0" y2="13.98" stroke="#ffffff" stroke-width="0.6"/>
<line x1="6.5" y1="19.67" x2="60.0" y2="19.67" stroke="#ffffff" stroke-width="0.6"/>
<line x1="6.5" y1="25.35" x2="60.0" y2="25.35" stroke="#ffffff" stroke-width="0.6"/>
<line x1="6.5" y1="31.03" x2="60.0" y2="31.03" stroke="#ffffff" stroke-width="0.6"/>
<line x1="6.5" y1="36.72" x2="60.0" y2="36.72" stroke="#ffffff" stroke-width="0.6"/>
<line x1="6.5" y1="42.40" x2="60.0" y2="42.40" stroke="#ffffff" stroke-width="0.6"/>
<rect x="2.6" y="7.80" width="1.8" height="1" fill="#8a8a8a" opacity="0.75"/>
<rect x="2.6" y="13.48" width="1.8" height="1" fill="#8a8a8a" opacity="0.75"/>
<rect x="2.6" y="19.17" width="1.8" height="1" fill="#8a8a8a" opacity="0.75"/>
<rect x="2.6" y="24.85" width="1.8" height="1" fill="#8a8a8a" opacity="0.75"/>
<rect x="2.6" y="30.53" width="1.8" height="1" fill="#8a8a8a" opacity="0.75"/>
<rect x="2.6" y="36.22" width="1.8" height="1" fill="#8a8a8a" opacity="0.75"/>
<rect x="2.6" y="41.90" width="1.8" height="1" fill="#8a8a8a" opacity="0.75"/>
<rect x="5.50" y="44.8" width="2" height="1" fill="#8a8a8a" opacity="0.75"/>
<rect x="14.42" y="44.8" width="2" height="1" fill="#8a8a8a" opacity="0.75"/>
<rect x="23.33" y="44.8" width="2" height="1" fill="#8a8a8a" opacity="0.75"/>
<rect x="32.25" y="44.8" width="2" height="1" fill="#8a8a8a" opacity="0.75"/>
<rect x="41.17" y="44.8" width="2" height="1" fill="#8a8a8a" opacity="0.75"/>
<rect x="50.08" y="44.8" width="2" height="1" fill="#8a8a8a" opacity="0.75"/>
<rect x="59.00" y="44.8" width="2" height="1" fill="#8a8a8a" opacity="0.75"/>
<line x1="11.0" y1="40.0" x2="51.1" y2="13.0" stroke="#9db6e4" stroke-width="0.8" opacity="1"/>
<circle cx="11.0" cy="39.4" r="0.7" fill="#9db6e4"/>
<circle cx="15.4" cy="36.9" r="0.7" fill="#9db6e4"/>
<circle cx="19.9" cy="33.7" r="0.7" fill="#9db6e4"/>
<circle cx="24.3" cy="30.9" r="0.7" fill="#9db6e4"/>
<circle cx="28.8" cy="29.2" r="0.7" fill="#9db6e4"/>
<circle cx="33.2" cy="26.5" r="0.7" fill="#9db6e4"/>
<circle cx="37.7" cy="22.8" r="0.7" fill="#9db6e4"/>
<circle cx="42.2" cy="17.6" r="0.7" fill="#9db6e4"/>
<circle cx="46.6" cy="14.6" r="0.7" fill="#9db6e4"/>
<circle cx="51.1" cy="13.6" r="0.7" fill="#9db6e4"/>
<text x="18.5" y="4.8" font-size="2.3" fill="#8c8c8c" textLength="27" lengthAdjust="spacingAndGlyphs">CALIBRATION CURVE</text>
<text x="32.4" y="11.7" font-size="2.2" font-weight="bold" fill="#2a2a2a" textLength="16.3" lengthAdjust="spacingAndGlyphs">y = 1.0584x - 0.2313</text>
<text x="36" y="14.7" font-size="2.2" font-weight="bold" fill="#2a2a2a" textLength="9" lengthAdjust="spacingAndGlyphs">R² = 0.988</text>
</g>
<g transform="translate(633.0,40.3) scale(0.977,0.98)">
<rect x="0" y="0" width="64" height="48" fill="#404040"/>
<line x1="6.50" y1="8.3" x2="6.50" y2="42.4" stroke="#4d4d4d" stroke-width="0.6"/>
<line x1="15.42" y1="8.3" x2="15.42" y2="42.4" stroke="#4d4d4d" stroke-width="0.6"/>
<line x1="24.33" y1="8.3" x2="24.33" y2="42.4" stroke="#4d4d4d" stroke-width="0.6"/>
<line x1="33.25" y1="8.3" x2="33.25" y2="42.4" stroke="#4d4d4d" stroke-width="0.6"/>
<line x1="42.17" y1="8.3" x2="42.17" y2="42.4" stroke="#4d4d4d" stroke-width="0.6"/>
<line x1="51.08" y1="8.3" x2="51.08" y2="42.4" stroke="#4d4d4d" stroke-width="0.6"/>
<line x1="60.00" y1="8.3" x2="60.00" y2="42.4" stroke="#4d4d4d" stroke-width="0.6"/>
<line x1="6.5" y1="8.30" x2="60.0" y2="8.30" stroke="#4d4d4d" stroke-width="0.6"/>
<line x1="6.5" y1="13.98" x2="60.0" y2="13.98" stroke="#4d4d4d" stroke-width="0.6"/>
<line x1="6.5" y1="19.67" x2="60.0" y2="19.67" stroke="#4d4d4d" stroke-width="0.6"/>
<line x1="6.5" y1="25.35" x2="60.0" y2="25.35" stroke="#4d4d4d" stroke-width="0.6"/>
<line x1="6.5" y1="31.03" x2="60.0" y2="31.03" stroke="#4d4d4d" stroke-width="0.6"/>
<line x1="6.5" y1="36.72" x2="60.0" y2="36.72" stroke="#4d4d4d" stroke-width="0.6"/>
<line x1="6.5" y1="42.40" x2="60.0" y2="42.40" stroke="#4d4d4d" stroke-width="0.6"/>
<rect x="2.6" y="7.80" width="1.8" height="1" fill="#b8b8b8" opacity="0.75"/>
<rect x="2.6" y="13.48" width="1.8" height="1" fill="#b8b8b8" opacity="0.75"/>
<rect x="2.6" y="19.17" width="1.8" height="1" fill="#b8b8b8" opacity="0.75"/>
<rect x="2.6" y="24.85" width="1.8" height="1" fill="#b8b8b8" opacity="0.75"/>
<rect x="2.6" y="30.53" width="1.8" height="1" fill="#b8b8b8" opacity="0.75"/>
<rect x="2.6" y="36.22" width="1.8" height="1" fill="#b8b8b8" opacity="0.75"/>
<rect x="2.6" y="41.90" width="1.8" height="1" fill="#b8b8b8" opacity="0.75"/>
<rect x="5.50" y="44.8" width="2" height="1" fill="#b8b8b8" opacity="0.75"/>
<rect x="14.42" y="44.8" width="2" height="1" fill="#b8b8b8" opacity="0.75"/>
<rect x="23.33" y="44.8" width="2" height="1" fill="#b8b8b8" opacity="0.75"/>
<rect x="32.25" y="44.8" width="2" height="1" fill="#b8b8b8" opacity="0.75"/>
<rect x="41.17" y="44.8" width="2" height="1" fill="#b8b8b8" opacity="0.75"/>
<rect x="50.08" y="44.8" width="2" height="1" fill="#b8b8b8" opacity="0.75"/>
<rect x="59.00" y="44.8" width="2" height="1" fill="#b8b8b8" opacity="0.75"/>
<line x1="11.0" y1="40.0" x2="51.1" y2="13.0" stroke="#4d7ed0" stroke-width="1.1" opacity="1"/>
<circle cx="11.0" cy="39.4" r="0.7" fill="#4d7ed0"/>
<circle cx="15.4" cy="36.9" r="0.7" fill="#4d7ed0"/>
<circle cx="19.9" cy="33.7" r="0.7" fill="#4d7ed0"/>
<circle cx="24.3" cy="30.9" r="0.7" fill="#4d7ed0"/>
<circle cx="28.8" cy="29.2" r="0.7" fill="#4d7ed0"/>
<circle cx="33.2" cy="26.5" r="0.7" fill="#4d7ed0"/>
<circle cx="37.7" cy="22.8" r="0.7" fill="#4d7ed0"/>
<circle cx="42.2" cy="17.6" r="0.7" fill="#4d7ed0"/>
<circle cx="46.6" cy="14.6" r="0.7" fill="#4d7ed0"/>
<circle cx="51.1" cy="13.6" r="0.7" fill="#4d7ed0"/>
<text x="18.5" y="4.8" font-size="2.3" fill="#dddddd" textLength="27" lengthAdjust="spacingAndGlyphs">CALIBRATION CURVE</text>
<text x="32.4" y="11.7" font-size="2.2" font-weight="bold" fill="#e8e8e8" textLength="16.3" lengthAdjust="spacingAndGlyphs">y = 1.0584x - 0.2313</text>
<text x="36" y="14.7" font-size="2.2" font-weight="bold" fill="#e8e8e8" textLength="9" lengthAdjust="spacingAndGlyphs">R² = 0.988</text>
</g>
</g>
<g id="labels">
<text x="8.72" y="80.70" font-size="12.1" fill="#222222" textLength="54.69" lengthAdjust="spacingAndGlyphs">Add Chart</text>
<text x="10.92" y="96.70" font-size="12.1" fill="#222222" textLength="43.59" lengthAdjust="spacingAndGlyphs">Element</text>
<text x="74.62" y="80.70" font-size="12.1" fill="#222222" textLength="31.79" lengthAdjust="spacingAndGlyphs">Quick</text>
<text x="68.22" y="96.70" font-size="12.1" fill="#222222" textLength="34.89" lengthAdjust="spacingAndGlyphs">Layout</text>
<text x="25.02" y="115.80" font-size="12.0" fill="#222222" textLength="70.08" lengthAdjust="spacingAndGlyphs">Chart Layouts</text>
<text x="134.22" y="81.00" font-size="12.1" fill="#222222" textLength="41.19" lengthAdjust="spacingAndGlyphs">Change</text>
<text x="133.02" y="97.00" font-size="12.1" fill="#222222" textLength="34.79" lengthAdjust="spacingAndGlyphs">Colors</text>
<text x="486.02" y="115.80" font-size="12.0" fill="#222222" textLength="60.28" lengthAdjust="spacingAndGlyphs">Chart Styles</text>
<text x="348.66" y="234.70" font-size="16.1" fill="#525252" textLength="131.35" lengthAdjust="spacingAndGlyphs">Calibration Curve</text>
<text x="277.1" y="462.6" font-size="10.4" fill="#525252" text-anchor="end">0</text>
<text x="277.1" y="428.7" font-size="10.4" fill="#525252" text-anchor="end">2</text>
<text x="277.1" y="394.8" font-size="10.4" fill="#525252" text-anchor="end">4</text>
<text x="277.1" y="361.0" font-size="10.4" fill="#525252" text-anchor="end">6</text>
<text x="277.1" y="327.1" font-size="10.4" fill="#525252" text-anchor="end">8</text>
<text x="277.1" y="293.2" font-size="10.4" fill="#525252" text-anchor="end">10</text>
<text x="277.1" y="259.3" font-size="10.4" fill="#525252" text-anchor="end">12</text>
<text x="416.15" y="474.70" font-size="11.2" fill="#525252" textLength="41.91" lengthAdjust="spacingAndGlyphs">X-Value</text>
<text x="426.58" y="280.00" font-size="10.6" fill="#525252" textLength="97.95" lengthAdjust="spacingAndGlyphs">y = 1.0584x - 0.2313</text>
<text x="451.18" y="295.00" font-size="10.6" fill="#525252" textLength="49.75" lengthAdjust="spacingAndGlyphs">R² = 0.988</text>
<text transform="translate(258.6,381.5) rotate(-90)" font-size="11.6" fill="#525252" textLength="47.5" lengthAdjust="spacingAndGlyphs">Axis Title</text>
<text x="19.31" y="16.70" font-size="12.3" fill="#ffffff" textLength="18.61" lengthAdjust="spacingAndGlyphs" stroke="#ffffff" stroke-width="0.25">File</text>
<text x="71.81" y="16.70" font-size="12.3" fill="#ffffff" textLength="33.61" lengthAdjust="spacingAndGlyphs" stroke="#ffffff" stroke-width="0.25">Home</text>
<text x="132.01" y="16.70" font-size="12.3" fill="#ffffff" textLength="29.01" lengthAdjust="spacingAndGlyphs" stroke="#ffffff" stroke-width="0.25">Insert</text>
<text x="187.91" y="16.70" font-size="12.3" fill="#ffffff" textLength="27.31" lengthAdjust="spacingAndGlyphs" stroke="#ffffff" stroke-width="0.25">Draw</text>
<text x="242.01" y="16.70" font-size="12.3" fill="#ffffff" textLength="65.31" lengthAdjust="spacingAndGlyphs" stroke="#ffffff" stroke-width="0.25">Page Layout</text>
<text x="334.01" y="16.70" font-size="12.3" fill="#ffffff" textLength="49.31" lengthAdjust="spacingAndGlyphs" stroke="#ffffff" stroke-width="0.25">Formulas</text>
<text x="410.41" y="16.70" font-size="12.3" fill="#ffffff" textLength="23.71" lengthAdjust="spacingAndGlyphs" stroke="#ffffff" stroke-width="0.25">Data</text>
<text x="460.91" y="16.70" font-size="12.3" fill="#ffffff" textLength="37.41" lengthAdjust="spacingAndGlyphs" stroke="#ffffff" stroke-width="0.25">Review</text>
<text x="524.61" y="16.70" font-size="12.3" fill="#ffffff" textLength="25.71" lengthAdjust="spacingAndGlyphs" stroke="#ffffff" stroke-width="0.25">View</text>
<text x="577.11" y="16.70" font-size="12.3" fill="#ffffff" textLength="53.71" lengthAdjust="spacingAndGlyphs" stroke="#ffffff" stroke-width="0.25">Developer</text>
</g>
<rect class="c" x="649" y="0" width="1" height="500" fill="#000"/>
</svg></body></html>
